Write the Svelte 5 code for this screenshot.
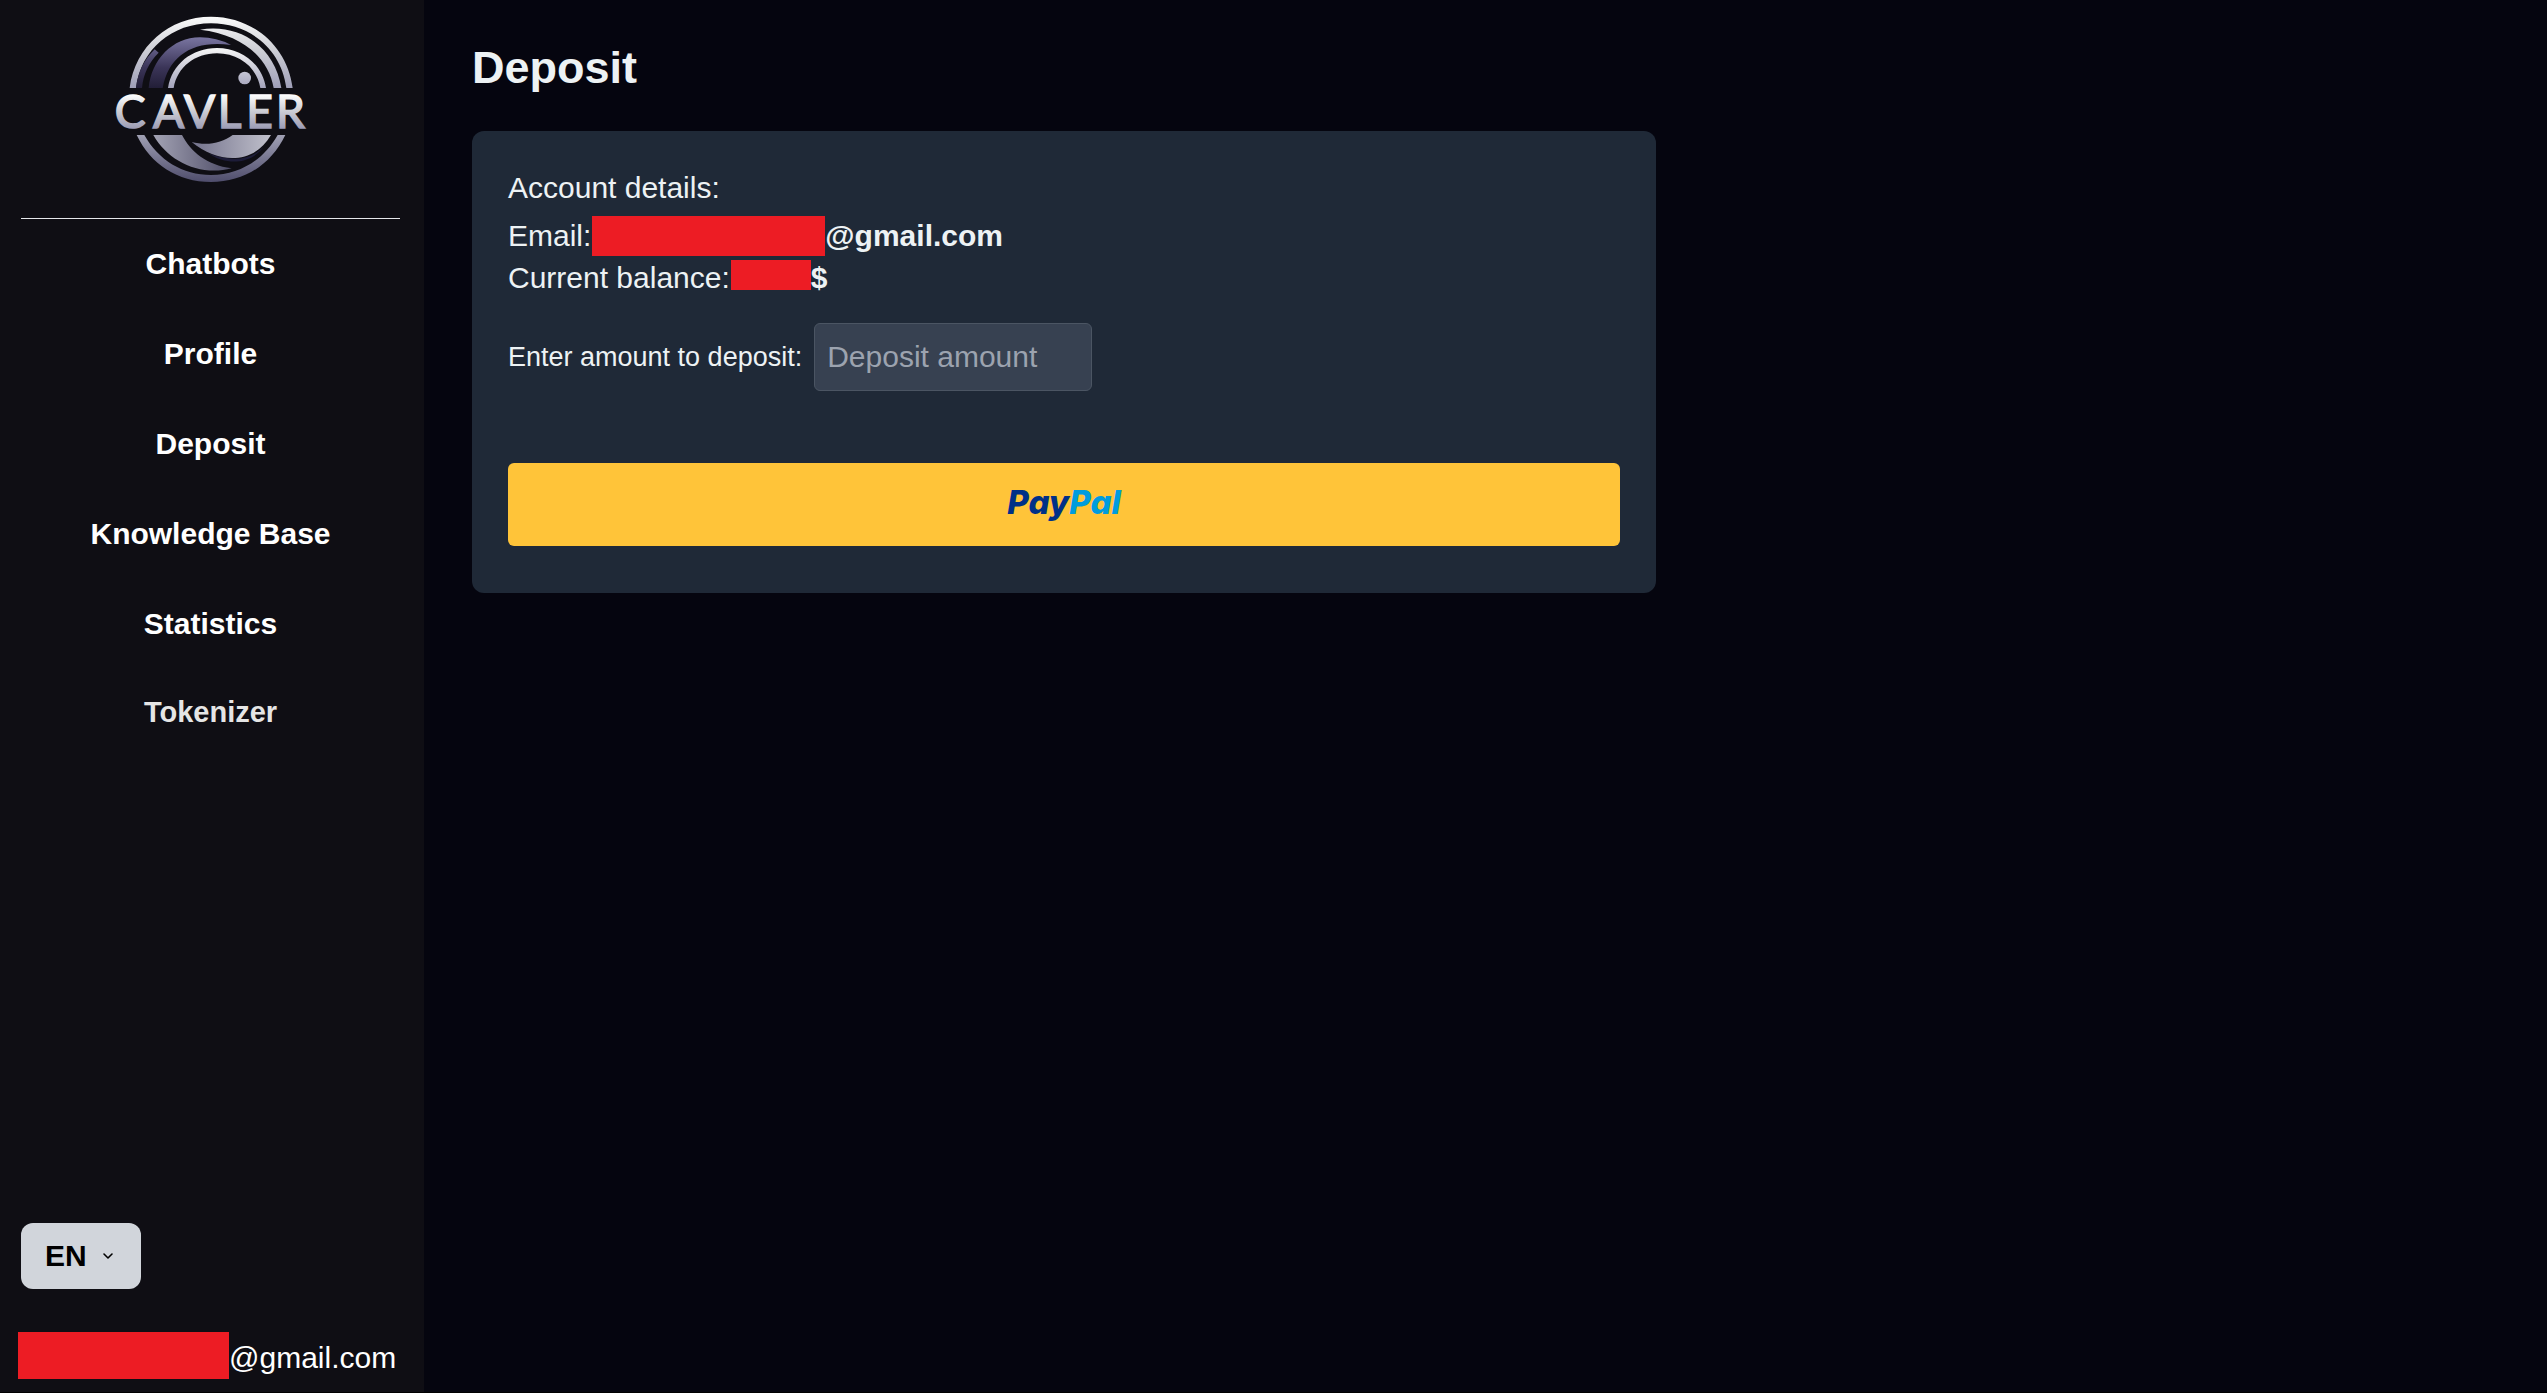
<script>
  const links = ['Chatbots', 'Profile', 'Deposit', 'Knowledge Base', 'Statistics', 'Tokenizer'];
  const languages = ['EN'];

  let language = $state('EN');
  let amount = $state('');
</script>

<div class="layout">
  <aside>
    <a class="logo" href="#home" aria-label="Cavler">
      <svg viewBox="75 48 576 504" width="192" height="168">
        <defs>
          <linearGradient id="silver" gradientUnits="userSpaceOnUse" x1="0" y1="50" x2="0" y2="264">
            <stop offset="0" stop-color="#fbfbfb" />
            <stop offset="0.45" stop-color="#cfd0d6" />
            <stop offset="1" stop-color="#9f9fb8" />
          </linearGradient>
          <linearGradient id="inner" gradientUnits="userSpaceOnUse" x1="0" y1="144" x2="0" y2="264">
            <stop offset="0" stop-color="#f6f6f6" />
            <stop offset="1" stop-color="#a3a3bb" />
          </linearGradient>
          <linearGradient id="violet" gradientUnits="userSpaceOnUse" x1="0" y1="110" x2="0" y2="264">
            <stop offset="0" stop-color="#7b77a3" />
            <stop offset="0.6" stop-color="#3b3558" />
            <stop offset="1" stop-color="#221e37" />
          </linearGradient>
          <linearGradient id="base" gradientUnits="userSpaceOnUse" x1="0" y1="405" x2="0" y2="546">
            <stop offset="0" stop-color="#a0a0b4" />
            <stop offset="1" stop-color="#4f4d6c" />
          </linearGradient>
          <linearGradient id="waveLeft" gradientUnits="userSpaceOnUse" x1="190" y1="0" x2="425" y2="0">
            <stop offset="0" stop-color="#a3a3b4" />
            <stop offset="1" stop-color="#4d4b66" />
          </linearGradient>
          <linearGradient id="waveRight" gradientUnits="userSpaceOnUse" x1="305" y1="0" x2="543" y2="0">
            <stop offset="0" stop-color="#73728c" />
            <stop offset="1" stop-color="#c0c0cb" />
          </linearGradient>
          <linearGradient id="word" gradientUnits="userSpaceOnUse" x1="0" y1="282" x2="0" y2="388">
            <stop offset="0" stop-color="#ffffff" />
            <stop offset="0.5" stop-color="#cbccd3" />
            <stop offset="1" stop-color="#9a9ab4" />
          </linearGradient>
        </defs>
        <path fill="url(#silver)" d="M119 264C135 138 238 50 363 50S592 138 608 264H589C574 147 479 70 363 70S153 147 138 264Z" />
        <path fill="url(#silver)" d="M330 89C452 69 555 143 574 264H551C536 178 463 104 330 89Z" />
        <path fill="url(#violet)" d="M138 264C143 218 163 178 194 148L206 158C176 188 160 222 156 264Z" />
        <path fill="url(#violet)" d="M176 264C184 180 247 112 330 112Q380 112 423 135C312 119 236 165 218 264Z" />
        <path fill="url(#inner)" d="M234 264C245 193 306 144 381 144S517 193 528 264H511C501 203 448 160 381 160S261 203 251 264Z" />
        <circle fill="url(#inner)" cx="464" cy="234" r="19" />
        <path fill="url(#base)" d="M140 405H163C205 480 278 525 363 525S521 480 563 405H586C544 493 463 546 363 546S182 493 140 405Z" />
        <path fill="url(#waveLeft)" d="M190 405H276C302 455 350 495 425 505C330 530 234 484 190 405Z" />
        <path fill="#1d1c38" d="M355 460C430 490 490 476 521 439C495 483 420 505 355 460Z" />
        <path fill="url(#waveRight)" d="M305 426C350 438 395 430 428 405H543C492 492 390 495 305 426Z" />
        <text x="74 189 282 383 469 558" y="383" fill="url(#word)" stroke="url(#word)" stroke-width="5">CAVLER</text>
      </svg>
    </a>

    <nav>
      {#each links as link}
        <a href="#{link.toLowerCase().replace(' ', '-')}" class:muted={link === 'Tokenizer'}>{link}</a>
      {/each}
    </nav>

    <div class="language">
      <select aria-label="Language" bind:value={language}>
        {#each languages as lang}
          <option value={lang}>{lang}</option>
        {/each}
      </select>
      <svg viewBox="0 0 12 8" width="12" height="8" aria-hidden="true">
        <path d="M2 2L6 6L10 2" fill="none" stroke="#000" stroke-width="1.6" stroke-linecap="round" stroke-linejoin="round" />
      </svg>
    </div>

    <div class="user">
      <span class="hidden-name"></span>
      <span>@gmail.com</span>
    </div>
  </aside>

  <main>
    <h1>Deposit</h1>
    <section class="card">
      <p class="heading">Account details:</p>
      <p class="email">Email:<span class="mask mask-email"></span><b>@gmail.com</b></p>
      <p class="balance">Current balance:<span class="mask mask-balance"></span><b>$</b></p>
      <div class="field">
        <label for="amount">Enter amount to deposit:</label>
        <input id="amount" type="text" inputmode="decimal" placeholder="Deposit amount" bind:value={amount} />
      </div>
      <button class="paypal" type="button"><span class="pay">Pay</span><span class="pal">Pal</span></button>
    </section>
  </main>
</div>

<style>
  :global(body) {
    background: #000;
  }

  .layout {
    display: flex;
    min-height: calc(100vh - 1px);
    background: #05050f;
    font-family: "Liberation Sans", Arial, sans-serif;
    font-size: 30px;
    line-height: 42px;
    color: #edf2f4;
  }

  aside {
    box-sizing: border-box;
    width: 424px;
    flex-shrink: 0;
    display: flex;
    flex-direction: column;
    padding: 16px 24px 13px 21px;
    background: #0f0e14;
    color: #fff;
  }

  .logo {
    display: flex;
    justify-content: center;
    padding-bottom: 34px;
    border-bottom: 1px solid #e5e7eb;
  }

  .logo text {
    font-family: Lato, sans-serif;
    font-size: 138px;
  }

  nav {
    display: flex;
    flex-direction: column;
    flex-grow: 1;
  }

  nav a {
    padding: 24px 0;
    color: #fff;
    font-weight: bold;
    text-align: center;
    text-decoration: none;
  }

  nav a.muted {
    color: #e5e5e5;
    font-size: 29px;
    line-height: 39px;
  }

  .language {
    position: relative;
    align-self: flex-start;
    margin-bottom: 43px;
  }

  .language select {
    appearance: none;
    display: block;
    width: 120px;
    height: 66px;
    padding: 0 24px 2px;
    border: none;
    border-radius: 12px;
    background: #d1d5db;
    color: #000;
    font: bold 30px "Liberation Sans", Arial, sans-serif;
    cursor: pointer;
  }

  .language svg {
    position: absolute;
    right: 27px;
    top: 29px;
    pointer-events: none;
  }

  .user {
    display: flex;
    align-items: flex-end;
    margin-left: -3px;
  }

  .hidden-name {
    width: 211px;
    height: 47px;
    background: #ed1c24;
  }

  main {
    flex-grow: 1;
    padding: 36px 48px;
  }

  h1 {
    margin: 0 0 32px;
    font-size: 45px;
    line-height: 63px;
  }

  .card {
    box-sizing: border-box;
    max-width: 1184px;
    padding: 36px 36px 47px;
    border-radius: 12px;
    background: #1f2937;
  }

  p {
    display: flex;
    align-items: center;
    margin: 0;
  }

  .heading {
    margin-bottom: 6px;
  }

  .mask {
    background: #ed1c24;
  }

  .mask-email {
    width: 233px;
    height: 40px;
    margin-left: 1px;
  }

  .mask-balance {
    width: 80px;
    height: 30px;
    margin: 0 0 6px 1px;
  }

  .field {
    display: flex;
    align-items: center;
    gap: 12px;
    margin: 24px 0 72px;
  }

  label {
    font-size: 27px;
  }

  input {
    box-sizing: border-box;
    width: 278px;
    height: 68px;
    padding: 0 12px;
    border: 1px solid #4b5563;
    border-radius: 6px;
    background: #374151;
    color: #edf2f4;
    font: 30px "Liberation Sans", Arial, sans-serif;
  }

  input::placeholder {
    color: #9ca3af;
    opacity: 1;
  }

  .paypal {
    display: flex;
    align-items: center;
    justify-content: center;
    width: 100%;
    height: 83px;
    padding: 0 0 6px;
    border: none;
    border-radius: 6px;
    background: #ffc439;
    font: italic 800 33px Inter, sans-serif;
    cursor: pointer;
  }

  .pay {
    color: #003087;
  }

  .pal {
    color: #009cde;
  }
</style>
